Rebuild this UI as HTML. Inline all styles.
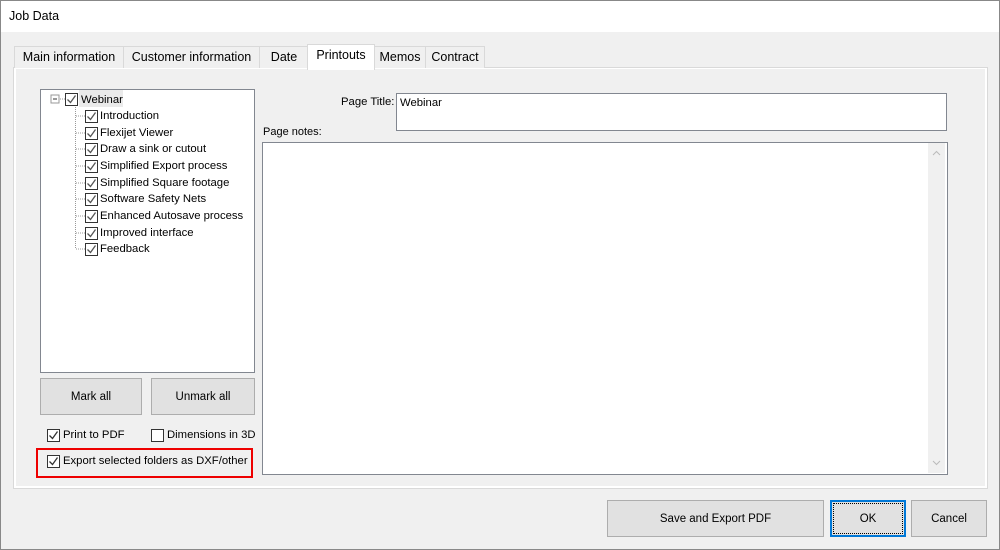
<!DOCTYPE html>
<html><head><style>
body{margin:0;width:1000px;height:550px;background:#f0f0f0;font-family:"Liberation Sans",sans-serif;font-size:11.3px;color:#000;position:relative;overflow:hidden}
.a{position:absolute}
.win{left:0;top:0;width:998px;height:548px;border:1px solid #888}
.title{left:1px;top:1px;width:998px;height:31px;background:#fff}
.tab{top:46px;height:21px;border:1px solid #d9d9d9;border-bottom:none;background:#f0f0f0;line-height:21px;text-align:center;font-size:12.5px}
.panel{left:13px;top:67px;width:973px;height:420px;background:#fff;border:1px solid #d9d9d9}
.inner{left:16px;top:69px;width:969px;height:417px;background:#f0f0f0}
.box{background:#fff;border:1px solid #828790}
.btn{background:#e1e1e1;border:1px solid #adadad;text-align:center;font-size:11.5px}
.cb{width:11px;height:11px;border:1px solid #333;background:#fff}
.cb svg{position:absolute;left:0;top:0}
.ti{left:100px;height:16px;line-height:16px}
</style></head><body>
<div class="a win"></div>
<div class="a title"></div>
<div class="a" style="left:9px;top:9px;font-size:12.5px">Job Data</div>
<div class="a panel"></div>
<div class="a inner"></div>
<div class="a tab" style="left:14px;width:108px">Main information</div>
<div class="a tab" style="left:123px;width:135px">Customer information</div>
<div class="a tab" style="left:259px;width:48px">Date</div>
<div class="a tab" style="left:307px;width:66px;top:44px;height:25px;background:#fff;line-height:21px">Printouts</div>
<div class="a tab" style="left:374px;width:50px">Memos</div>
<div class="a tab" style="left:425px;width:58px">Contract</div>

<div class="a box" style="left:40px;top:89px;width:213px;height:282px"></div>
<svg class="a" style="left:40px;top:89px" width="214" height="180">
<rect x="11" y="6" width="8" height="8" fill="#fff" stroke="#999"/><line x1="13" y1="10" x2="17" y2="10" stroke="#333"/>
<line x1="20" y1="10" x2="25" y2="10" stroke="#999" stroke-dasharray="1 1"/>
<line x1="35.5" y1="18" x2="35.5" y2="160" stroke="#999" stroke-dasharray="1 1"/>
<g stroke="#999" stroke-dasharray="1 1">
<line x1="36" y1="27" x2="45" y2="27"/><line x1="36" y1="44" x2="45" y2="44"/><line x1="36" y1="60" x2="45" y2="60"/><line x1="36" y1="77" x2="45" y2="77"/><line x1="36" y1="94" x2="45" y2="94"/><line x1="36" y1="110" x2="45" y2="110"/><line x1="36" y1="127" x2="45" y2="127"/><line x1="36" y1="144" x2="45" y2="144"/><line x1="36" y1="160" x2="45" y2="160"/></g>
<rect x="39" y="1" width="44" height="17" fill="#eaeaea"/>
<g fill="#fff" stroke="#333"><rect x="25.5" y="4.5" width="12" height="12"/>
<rect x="45.5" y="21.5" width="12" height="12"/><rect x="45.5" y="38.5" width="12" height="12"/><rect x="45.5" y="54.5" width="12" height="12"/><rect x="45.5" y="71.5" width="12" height="12"/><rect x="45.5" y="88.5" width="12" height="12"/><rect x="45.5" y="104.5" width="12" height="12"/><rect x="45.5" y="121.5" width="12" height="12"/><rect x="45.5" y="138.5" width="12" height="12"/><rect x="45.5" y="154.5" width="12" height="12"/></g>
<g fill="none" stroke="#555" stroke-width="1.3">
<path d="M27.5 10.5l3 3 5-7"/>
<path d="M47.5 27.5l3 3 5-7"/><path d="M47.5 44.5l3 3 5-7"/><path d="M47.5 60.5l3 3 5-7"/><path d="M47.5 77.5l3 3 5-7"/><path d="M47.5 94.5l3 3 5-7"/><path d="M47.5 110.5l3 3 5-7"/><path d="M47.5 127.5l3 3 5-7"/><path d="M47.5 144.5l3 3 5-7"/><path d="M47.5 160.5l3 3 5-7"/></g>
</svg>
<div class="a" style="left:81px;top:92px;line-height:16px">Webinar</div>
<div class="a ti" style="top:108px">Introduction</div>
<div class="a ti" style="top:125px">Flexijet Viewer</div>
<div class="a ti" style="top:141px">Draw a sink or cutout</div>
<div class="a ti" style="top:158px">Simplified Export process</div>
<div class="a ti" style="top:175px">Simplified Square footage</div>
<div class="a ti" style="top:191px">Software Safety Nets</div>
<div class="a ti" style="top:208px">Enhanced Autosave process</div>
<div class="a ti" style="top:225px">Improved interface</div>
<div class="a ti" style="top:241px">Feedback</div>

<div class="a btn" style="left:40px;top:378px;width:100px;height:35px;line-height:37px">Mark all</div>
<div class="a btn" style="left:151px;top:378px;width:102px;height:35px;line-height:37px">Unmark all</div>

<div class="a cb" style="left:47px;top:429px"><svg width="11" height="11"><path d="M1.5 5.5l3 3 5-7" fill="none" stroke="#333" stroke-width="1.3"/></svg></div>
<div class="a" style="left:63px;top:429px">Print to PDF</div>
<div class="a cb" style="left:151px;top:429px"></div>
<div class="a" style="left:167px;top:429px">Dimensions in 3D</div>
<div class="a" style="left:36px;top:448px;width:213px;height:26px;border:2px solid #e00"></div>
<div class="a cb" style="left:47px;top:455px"><svg width="11" height="11"><path d="M1.5 5.5l3 3 5-7" fill="none" stroke="#333" stroke-width="1.3"/></svg></div>
<div class="a" style="left:63px;top:455px">Export selected folders as DXF/other</div>

<div class="a" style="left:341px;top:96px">Page Title:</div>
<div class="a box" style="left:396px;top:93px;width:549px;height:36px"></div>
<div class="a" style="left:400px;top:97px">Webinar</div>
<div class="a" style="left:263px;top:126px;font-size:11px">Page notes:</div>
<div class="a box" style="left:262px;top:142px;width:684px;height:331px"></div>
<div class="a" style="left:928px;top:143px;width:17px;height:330px;background:#f0f0f0"></div>
<svg class="a" style="left:928px;top:143px" width="17" height="330"><path d="M5 12l3.5-3.5 3.5 3.5M5 318l3.5 3.5 3.5-3.5" fill="none" stroke="#bbb"/></svg>

<div class="a btn" style="left:607px;top:500px;width:215px;height:35px;line-height:37px">Save and Export PDF</div>
<div class="a btn" style="left:830px;top:500px;width:72px;height:33px;line-height:35px;border:2px solid #0078d7">OK</div>
<div class="a" style="left:833px;top:503px;width:68px;height:29px;border:1px dotted #000"></div>
<div class="a btn" style="left:911px;top:500px;width:74px;height:35px;line-height:37px">Cancel</div>
</body></html>
